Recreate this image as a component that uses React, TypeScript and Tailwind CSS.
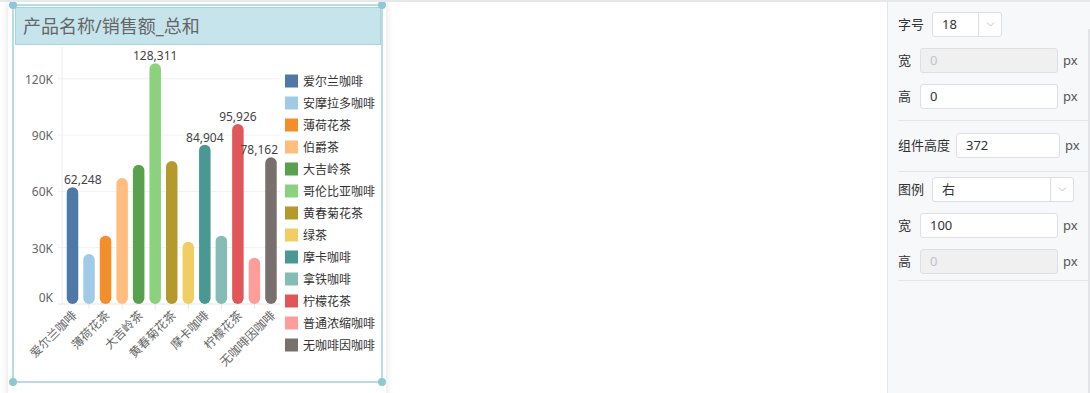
import React from "react";

const FONT = '"Noto Sans", "Noto Sans CJK SC", sans-serif';

type Item = [string, number, string];

const data: Item[] = [
  ["爱尔兰咖啡", 62248, "#4e79a7"],
  ["安摩拉多咖啡", 26600, "#a0cbe8"],
  ["薄荷花茶", 36400, "#f28e2b"],
  ["伯爵茶", 67100, "#ffbe7d"],
  ["大吉岭茶", 74200, "#59a14f"],
  ["哥伦比亚咖啡", 128311, "#8cd17d"],
  ["黄春菊花茶", 76200, "#b6992d"],
  ["绿茶", 33200, "#f1ce63"],
  ["摩卡咖啡", 84904, "#499894"],
  ["拿铁咖啡", 36400, "#86bcb6"],
  ["柠檬花茶", 95926, "#e15759"],
  ["普通浓缩咖啡", 24700, "#ff9d9a"],
  ["无咖啡因咖啡", 78162, "#79706e"],
];

const BASE = 304;
const PER = 56.3 / 30000;
const cx = (i: number) => 72.5 + 16.54 * i;
const labelled = [0, 5, 8, 10, 12];

function BarChart() {
  return (
    <svg width={366} height={336} viewBox="15 45 366 336" style={{ fontFamily: FONT }}>
      {/* grid */}
      {[0, 30, 60, 90, 120].map((k) => {
        const y = BASE - k * 1000 * PER;
        return (
          <g key={k}>
            <line x1={58} x2={280} y1={y} y2={y} stroke={k === 0 ? "#e6e6e6" : "#f2f2f2"} />
            <text x={53} y={k === 0 ? y - 2.5 : y + 5} textAnchor="end" fontSize={12} fill="#666">
              {k}K
            </text>
          </g>
        );
      })}
      <line x1={62} x2={62} y1={47} y2={BASE} stroke="#eeeeee" />
      {data.map((_, i) =>
        i % 2 === 1 ? <line key={"t" + i} x1={cx(i)} x2={cx(i)} y1={BASE} y2={BASE + 5} stroke="#e6e6e6" /> : null
      )}

      {/* bars */}
      {data.map(([name, v, c], i) => {
        const h = v * PER;
        return <rect key={name} x={cx(i) - 5.75} y={BASE - h} width={11.5} height={h} rx={5.75} fill={c} />;
      })}

      {/* value labels */}
      {labelled.map((i) => {
        const [, v] = data[i];
        const top = BASE - v * PER;
        const anchor = i === 0 ? "start" : i === 12 ? "end" : "middle";
        const x = i === 0 ? 64 : i === 12 ? 278 : cx(i);
        return (
          <text key={"v" + i} x={x} y={top - 3} textAnchor={anchor} fontSize={12} fill="#444">
            {v.toLocaleString("en-US")}
          </text>
        );
      })}

      {/* x labels */}
      {data.map(([name], i) =>
        i % 2 === 0 ? (
          <text
            key={"x" + i}
            transform={`translate(${cx(i) + 5} ${BASE + 12}) rotate(-45)`}
            textAnchor="end"
            fontSize={12}
            fill="#666"
          >
            {name}
          </text>
        ) : null
      )}

      {/* legend */}
      {data.map(([name, , c], i) => {
        const y = 81 + 22 * i;
        return (
          <g key={"l" + name}>
            <rect x={285} y={y - 6.5} width={13} height={13} fill={c} />
            <text x={303} y={y + 5} fontSize={12} fill="#333">
              {name}
            </text>
          </g>
        );
      })}
    </svg>
  );
}

function Chevron() {
  return (
    <svg width="9" height="5" viewBox="0 0 9 5">
      <path d="M1 .5l3.5 3.5 3.5-3.5" fill="none" stroke="#c0c4cc" strokeWidth="1" />
    </svg>
  );
}

function Field({ value, disabled, w }: { value: string; disabled?: boolean; w: string }) {
  return (
    <div
      className={`${w} h-[25px] flex items-center pl-[9px] rounded-[3px] border border-[#dcdfe6] text-[13px] ${
        disabled ? "bg-[#f0f0f0] text-[#c0c4cc]" : "bg-white text-[#333]"
      }`}
    >
      {value}
    </div>
  );
}

function Select({ value, w }: { value: string; w: string }) {
  return (
    <div className={`${w} h-[25px] flex rounded-[3px] border border-[#dcdfe6] bg-white text-[13px] text-[#333]`}>
      <div className="flex-1 flex items-center pl-[9px]">{value}</div>
      <div className="w-[23px] border-l border-[#dcdfe6] flex items-center justify-center">
        <Chevron />
      </div>
    </div>
  );
}

function Label({ children, w }: { children: React.ReactNode; w: string }) {
  return <div className={`${w} text-[13px] text-[#333] shrink-0`}>{children}</div>;
}

function Px() {
  return <span className="ml-[5px] text-[13px] text-[#555]">px</span>;
}

function SidePanel() {
  return (
    <aside className="relative w-[203px] shrink-0 bg-[#f7f8fa] border-l border-[#e4e6ea] pl-[10px]">
      <div className="flex flex-col gap-[11px] pt-[10px] pb-[11px] border-b border-[#e4e6ea]">
        <div className="flex items-center">
          <Label w="w-[34px]">字号</Label>
          <Select value="18" w="w-[70px]" />
        </div>
        <div className="flex items-center">
          <Label w="w-[22px]">宽</Label>
          <Field value="0" disabled w="w-[138px]" />
          <Px />
        </div>
        <div className="flex items-center">
          <Label w="w-[22px]">高</Label>
          <Field value="0" w="w-[138px]" />
          <Px />
        </div>
      </div>
      <div className="flex items-center pt-[12px] pb-[13px] border-b border-[#e4e6ea]">
        <Label w="w-[58px]">组件高度</Label>
        <Field value="372" w="w-[104px]" />
        <Px />
      </div>
      <div className="flex flex-col gap-[11px] pt-[5px] pb-[6px] border-b border-[#e4e6ea]">
        <div className="flex items-center">
          <Label w="w-[34px]">图例</Label>
          <Select value="右" w="w-[142px]" />
        </div>
        <div className="flex items-center">
          <Label w="w-[22px]">宽</Label>
          <Field value="100" w="w-[138px]" />
          <Px />
        </div>
        <div className="flex items-center">
          <Label w="w-[22px]">高</Label>
          <Field value="0" disabled w="w-[138px]" />
          <Px />
        </div>
      </div>
      <div className="absolute right-0 top-[27px] bottom-0 w-[2px] bg-[#e3e4e7]" />
    </aside>
  );
}

function Handle({ pos }: { pos: string }) {
  return <span className={`absolute ${pos} w-[8px] h-[8px] rounded-full bg-[#8ec7d6]`} />;
}

export default function App() {
  return (
    <div className="w-[1090px] h-[393px] overflow-hidden flex border-t-2 border-[#e6e8ec] bg-white" style={{ fontFamily: FONT }}>
      {/* canvas */}
      <main className="flex-1 bg-white pl-[8px] overflow-hidden">
        <div className="w-[378px] h-[400px] bg-white shadow-[0_0_8px_rgba(0,0,0,0.12)] pl-[4px] pt-[2px]">
          <div className="relative w-[371px] h-[379px] border-2 border-[#b8dce5] p-px">
            <div className="h-[38px] bg-[#c6e4ec] border border-[#a9d4df] w-[366px] flex items-center pl-[7px] text-[18px] text-[#666]">
              产品名称/销售额_总和
            </div>
            <BarChart />
            <Handle pos="-left-[5px] -top-[5px]" />
            <Handle pos="-right-[5px] -top-[5px]" />
            <Handle pos="-left-[5px] -bottom-[5px]" />
            <Handle pos="-right-[5px] -bottom-[5px]" />
          </div>
        </div>
      </main>
      <SidePanel />
    </div>
  );
}
